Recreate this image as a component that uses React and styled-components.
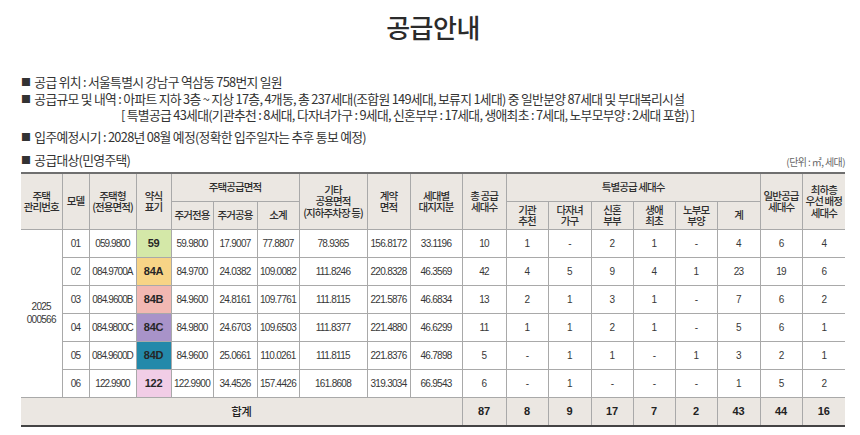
import React from "react";
import styled, { createGlobalStyle } from "styled-components";

const GlobalStyle = createGlobalStyle`
    body {
        margin: 0;
        background: #fff;
        font-family: "Noto Sans CJK KR", "Noto Sans", sans-serif;
        color: #333;
    }
`;

const Page = styled.div`
    width: 860px;
    height: 435px;
    box-sizing: border-box;
    padding: 8px 15px 0 21px;
    overflow: hidden;
`;

const Title = styled.h1`
    margin: 0 0 28px;
    text-align: center;
    font-size: 26px;
    font-weight: 500;
    line-height: 38px;
    color: #2b2b2b;
    letter-spacing: -0.5px;
`;

const InfoList = styled.ul`
    list-style: none;
    margin: 0;
    padding: 0;
    font-size: 12.8px;
    letter-spacing: -0.7px;
    color: #333;
`;

const InfoItem = styled.li`
    line-height: 16.5px;
    margin-bottom: ${(p) => p.$space || 0}px;
    white-space: nowrap;

    &::before {
        content: "■";
        font-size: 10px;
        margin-right: 4px;
        vertical-align: 1px;
    }
`;

const Indent = styled.div`
    padding-left: 100px;
`;

const TableHead = styled.div`
    display: flex;
    justify-content: space-between;
    align-items: flex-end;
    margin-top: 7px;
    padding-bottom: 3px;
`;

const Unit = styled.span`
    font-size: 10px;
    color: #666;
    letter-spacing: -0.6px;
`;

const Table = styled.table`
    width: 824px;
    table-layout: fixed;
    border-collapse: collapse;
    border-top: 2px solid #6f6f6f;
    border-bottom: 2px solid #444;
    border-left: hidden;
    border-right: hidden;
    font-size: 10px;
    color: #333;

    th, td {
        border: 1px solid #a9a9a9;
        padding: 0;
        text-align: center;
        vertical-align: middle;
        overflow: hidden;
        white-space: nowrap;
    }
`;

const Th = styled.th`
    background: #ebe7e2;
    height: 27px;
    font-weight: 500;
    font-size: 10.5px;
    line-height: 11.5px;
    letter-spacing: -0.9px;
    color: #2e2e2e;
    white-space: pre-line !important;
`;

const Td = styled.td`
    height: 27px;
    font-family: "Liberation Sans", sans-serif;
    font-size: 10px;
    letter-spacing: ${(p) => (p.$tight ? "-0.9px" : "-0.7px")};
    white-space: pre-line !important;
    line-height: 13px;
    color: #383838;
`;

const AbbrCell = styled.td`
    background: ${(p) => p.$bg};
    font-family: "Liberation Sans", sans-serif;
    font-weight: 700;
    font-size: 11px;
    letter-spacing: -0.3px;
    color: #262626;
`;

const SumRow = styled.tr`
    td {
        background: #ebe7e2;
        height: 27px;
        font-weight: 700;
        font-size: 11px;
        font-family: "Liberation Sans", sans-serif;
        color: #222;
    }
`;

const SumLabel = styled.td`
    font-family: "Noto Sans CJK KR", sans-serif !important;
    font-weight: 500 !important;
    font-size: 11.5px !important;
    letter-spacing: -0.5px;
`;

const widths = [41, 27, 47, 35, 42, 44, 42, 68, 43, 52, 44, 42, 43, 42, 42, 42, 43, 42, 43];

const rows = [
    ["01", "059.9800", "59", "#d4e8a8", "59.9800", "17.9007", "77.8807", "78.9365", "156.8172", "33.1196", "10", "1", "-", "2", "1", "-", "4", "6", "4"],
    ["02", "084.9700A", "84A", "#f7d486", "84.9700", "24.0382", "109.0082", "111.8246", "220.8328", "46.3569", "42", "4", "5", "9", "4", "1", "23", "19", "6"],
    ["03", "084.9600B", "84B", "#f2b8b2", "84.9600", "24.8161", "109.7761", "111.8115", "221.5876", "46.6834", "13", "2", "1", "3", "1", "-", "7", "6", "2"],
    ["04", "084.9800C", "84C", "#a893c9", "84.9800", "24.6703", "109.6503", "111.8377", "221.4880", "46.6299", "11", "1", "1", "2", "1", "-", "5", "6", "1"],
    ["05", "084.9600D", "84D", "#2389aa", "84.9600", "25.0661", "110.0261", "111.8115", "221.8376", "46.7898", "5", "-", "1", "1", "-", "1", "3", "2", "1"],
    ["06", "122.9900", "122", "#f1cde6", "122.9900", "34.4526", "157.4426", "161.8608", "319.3034", "66.9543", "6", "-", "1", "-", "-", "-", "1", "5", "2"],
];

const totals = ["87", "8", "9", "17", "7", "2", "43", "44", "16"];

const SupplyTable = () => (
    <Table>
        <colgroup>
            {widths.map((w, i) => (
                <col key={i} style={{ width: w }} />
            ))}
        </colgroup>
        <thead>
            <tr>
                <Th rowSpan={2}>{"주택\n관리번호"}</Th>
                <Th rowSpan={2}>모델</Th>
                <Th rowSpan={2}>{"주택형\n(전용면적)"}</Th>
                <Th rowSpan={2}>{"약식\n표기"}</Th>
                <Th colSpan={3}>주택공급면적</Th>
                <Th rowSpan={2}>{"기타\n공용면적\n(지하주차장 등)"}</Th>
                <Th rowSpan={2}>{"계약\n면적"}</Th>
                <Th rowSpan={2}>{"세대별\n대지지분"}</Th>
                <Th rowSpan={2}>{"총 공급\n세대수"}</Th>
                <Th colSpan={6}>특별공급 세대수</Th>
                <Th rowSpan={2}>{"일반공급\n세대수"}</Th>
                <Th rowSpan={2}>{"최하층\n우선 배정\n세대수"}</Th>
            </tr>
            <tr>
                <Th>주거전용</Th>
                <Th>주거공용</Th>
                <Th>소계</Th>
                <Th>{"기관\n추천"}</Th>
                <Th>{"다자녀\n가구"}</Th>
                <Th>{"신혼\n부부"}</Th>
                <Th>{"생애\n최초"}</Th>
                <Th>{"노부모\n부양"}</Th>
                <Th>계</Th>
            </tr>
        </thead>
        <tbody>
            {rows.map((r, i) => {
                const [model, type, abbr, color, ...rest] = r;
                return (
                    <tr key={model}>
                        {i === 0 && <Td rowSpan={6}>{"2025\n000566"}</Td>}
                        <Td>{model}</Td>
                        <Td $tight>{type}</Td>
                        <AbbrCell $bg={color}>{abbr}</AbbrCell>
                        {rest.map((v, j) => (
                            <Td key={j}>{v}</Td>
                        ))}
                    </tr>
                );
            })}
            <SumRow>
                <SumLabel colSpan={10}>합계</SumLabel>
                {totals.map((t, i) => (
                    <td key={i}>{t}</td>
                ))}
            </SumRow>
        </tbody>
    </Table>
);

const App = () => (
    <Page>
        <GlobalStyle />
        <Title>공급안내</Title>
        <InfoList>
            <InfoItem>공급 위치 : 서울특별시 강남구 역삼동 758번지 일원</InfoItem>
            <InfoItem $space={5}>
                공급규모 및 내역 : 아파트 지하 3층 ~ 지상 17층, 4개동, 총 237세대(조합원 149세대, 보류지 1세대) 중 일반분양 87세대 및 부대복리시설
                <Indent>[ 특별공급 43세대(기관추천 : 8세대, 다자녀가구 : 9세대, 신혼부부 : 17세대, 생애최초 : 7세대, 노부모부양 : 2세대 포함) ]</Indent>
            </InfoItem>
            <InfoItem>입주예정시기 : 2028년 08월 예정(정확한 입주일자는 추후 통보 예정)</InfoItem>
        </InfoList>
        <TableHead>
            <InfoList as="div">
                <InfoItem as="div">공급대상(민영주택)</InfoItem>
            </InfoList>
            <Unit>(단위 : ㎡, 세대)</Unit>
        </TableHead>
        <SupplyTable />
    </Page>
);

export default App;
